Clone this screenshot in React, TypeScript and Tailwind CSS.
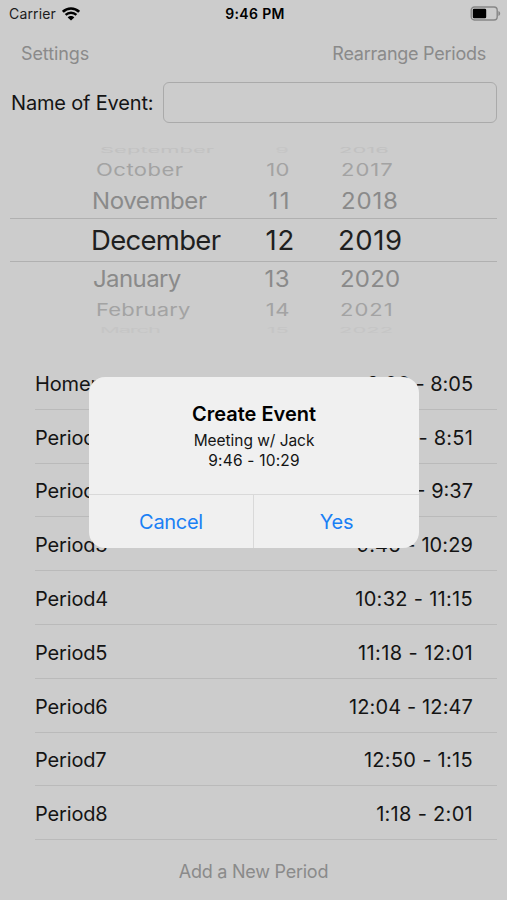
import React from 'react';

const pickerRows = [
  {
    month: 'September', day: '9', year: '2016',
    row: 'h-3 text-[22px] text-[#b2b2b2] opacity-40',
    monthClass: 'ml-[100px] w-[164px] scale-y-[0.35]',
    dayClass: 'w-[25px] scale-y-[0.35] opacity-60',
    yearClass: 'ml-[50px] scale-y-[0.35]',
  },
  {
    month: 'October', day: '10', year: '2017',
    row: 'h-[28px] text-[22px] text-[#a3a3a3]',
    monthClass: 'ml-[96px] w-[164px] scale-y-[0.76] tracking-[0.5px]',
    dayClass: 'w-[30px] scale-y-[0.76] tracking-[0.5px]',
    yearClass: 'ml-[51px] scale-y-[0.76] tracking-[1px]',
  },
  {
    month: 'November', day: '11', year: '2018',
    row: 'h-[34px] text-[24px] text-[#8a8a8a]',
    monthClass: 'ml-[92px] w-[164px] scale-y-[0.95] tracking-[-0.4px]',
    dayClass: 'w-[35px] scale-y-[0.95] tracking-[1.5px]',
    yearClass: 'ml-[50px] scale-y-[0.95] tracking-[0.8px]',
  },
  {
    month: 'December', day: '12', year: '2019',
    row: 'h-[44px] mx-[10px] border-y border-[#b0b0b0] text-[27.5px] text-[#1f1f1f]',
    monthClass: 'ml-[81px] w-[164px] pt-px tracking-[-0.7px]',
    dayClass: 'w-[40px] pt-px tracking-[0.8px]',
    yearClass: 'ml-[43px] pt-px tracking-[0.6px]',
  },
  {
    month: 'January', day: '13', year: '2020',
    row: 'h-[34px] text-[24px] text-[#8a8a8a]',
    monthClass: 'ml-[93px] w-[163px] scale-y-[0.95] tracking-[-0.6px]',
    dayClass: 'w-[34px] scale-y-[0.95] tracking-[0.5px]',
    yearClass: 'ml-[50px] scale-y-[0.95] tracking-[0.2px]',
  },
  {
    month: 'February', day: '14', year: '2021',
    row: 'h-[28px] text-[22px] text-[#a3a3a3]',
    monthClass: 'ml-[96px] w-[164px] scale-y-[0.76] tracking-[0.2px]',
    dayClass: 'w-[30px] scale-y-[0.76] tracking-[0.5px]',
    yearClass: 'ml-[50px] scale-y-[0.76] tracking-[1px]',
  },
  {
    month: 'March', day: '15', year: '2022',
    row: 'h-3 text-[22px] text-[#b2b2b2] opacity-25',
    monthClass: 'ml-[100px] w-[164px] scale-y-[0.35] tracking-[-1.2px]',
    dayClass: 'w-[25px] scale-y-[0.35]',
    yearClass: 'ml-[50px] scale-y-[0.35]',
  },
];

const periods = [
  { name: 'Homeroom', time: '8:00 - 8:05', spacing: 'tracking-[-0.05px]' },
  { name: 'Period1', time: '8:08 - 8:51', spacing: 'tracking-[0.2px]' },
  { name: 'Period2', time: '8:54 - 9:37', spacing: 'tracking-normal' },
  { name: 'Period3', time: '9:46 - 10:29', spacing: 'tracking-[0.1px]' },
  { name: 'Period4', time: '10:32 - 11:15', spacing: 'tracking-[0.3px]' },
  { name: 'Period5', time: '11:18 - 12:01', spacing: 'tracking-[0.4px]' },
  { name: 'Period6', time: '12:04 - 12:47', spacing: 'tracking-[0.12px]' },
  { name: 'Period7', time: '12:50 - 1:15', spacing: 'tracking-[0.3px]' },
  { name: 'Period8', time: '1:18 - 2:01', spacing: 'tracking-[0.3px]' },
];

const StatusBar = () => {
  return (
    <div className="grid grid-cols-3 items-center h-[27px] pl-[9px] pr-[6px] text-black">
      <div className="flex items-center gap-[6px]">
        <span className="text-[14px] tracking-[0.15px] text-[#1c1c1c]">Carrier</span>
        <svg width="18" height="14" viewBox="0 0 18 14" fill="none" stroke="currentColor">
          <path d="M0.9 4.8C5.4 0.4 12.6 0.4 17.1 4.8" strokeWidth="2.6" />
          <path d="M3.6 7.9C6.6 5 11.4 5 14.4 7.9" strokeWidth="2.4" />
          <path d="M9 13.6L5.7 10.4C7.5 8.6 10.5 8.6 12.3 10.4Z" fill="currentColor" stroke="none" />
        </svg>
      </div>
      <span className="text-center text-[14px] font-semibold tracking-[0.35px]">9:46 PM</span>
      <svg className="justify-self-end" width="31" height="15" viewBox="0 0 31 15" fill="none">
        <rect x="1.2" y="1" width="26" height="13" rx="3.2" stroke="#868686" strokeWidth="1.4" />
        <rect x="2.8" y="2.7" width="13.4" height="9.6" rx="1.3" fill="#000" />
        <path d="M28.4 5C30.8 5.9 30.8 9.1 28.4 10Z" fill="#868686" />
      </svg>
    </div>
  );
};

const DatePicker = () => {
  return (
    <div className="mt-[21px] h-[192px] overflow-hidden">
      {pickerRows.map(item => (
        <div key={item.month} className={`flex items-center leading-none ${item.row}`}>
          <span className={item.monthClass}>{item.month}</span>
          <span className={`text-right ${item.dayClass}`}>{item.day}</span>
          <span className={item.yearClass}>{item.year}</span>
        </div>
      ))}
    </div>
  );
};

const PeriodList = () => {
  return (
    <div className="mt-5 ml-[35px] mr-[10px]">
      {periods.map(period => (
        <div
          key={period.name}
          className="flex items-center justify-between h-[53.8px] pt-[3px] pr-6 border-b border-[#bababa] text-[20px] text-[#141414]"
        >
          <span className="tracking-[-0.15px]">{period.name}</span>
          <span className={period.spacing}>{period.time}</span>
        </div>
      ))}
    </div>
  );
};

const CreateEventAlert = () => {
  return (
    <div className="absolute left-[89px] top-[377px] flex flex-col w-[330px] h-[171px] rounded-[16px] bg-[#f0f0f0] overflow-hidden text-center">
      <div className="h-[117px] pt-6 text-black">
        <h2 className="text-[20px] leading-[26px] font-semibold">Create Event</h2>
        <p className="mt-1 text-[15.5px] leading-[19.7px] tracking-[-0.05px] text-[#141414]">
          Meeting w/ Jack
          <br />
          <span className="tracking-[0.2px]">9:46 - 10:29</span>
        </p>
      </div>
      <div className="flex flex-1 border-t border-[#d9d9d9] text-[20px] text-[#1a80f5]">
        <button className="w-[165px] pt-px border-r border-[#d9d9d9] tracking-[-0.3px]">Cancel</button>
        <button className="flex-1 pt-px tracking-[-0.2px]">Yes</button>
      </div>
    </div>
  );
};

const App = () => {
  return (
    <div className="relative w-[507px] h-[900px] overflow-hidden bg-[#cccccc] font-['Inter','Liberation_Sans',sans-serif]">
      <StatusBar />
      <div className="flex items-center justify-between h-[55px] pb-0.5 pl-[21px] pr-[21px] text-[18px] text-[#8a8a8a]">
        <button className="tracking-[-0.1px]">Settings</button>
        <button className="tracking-[-0.25px]">Rearrange Periods</button>
      </div>
      <div className="flex items-center gap-[10px] pl-[11px] pr-[10px] h-[41px]">
        <label htmlFor="event" className="w-[142px] text-[20px] tracking-[-0.17px] text-[#141414] whitespace-nowrap">Name of Event:</label>
        <input id="event" className="flex-1 min-w-0 h-[41px] border border-[#aaaaaa] rounded-md" />
      </div>
      <DatePicker />
      <PeriodList />
      <button className="block mx-auto mt-[18px] text-[18px] tracking-[-0.25px] text-[#8a8a8a]">Add a New Period</button>
      <CreateEventAlert />
    </div>
  );
};

export default App;
